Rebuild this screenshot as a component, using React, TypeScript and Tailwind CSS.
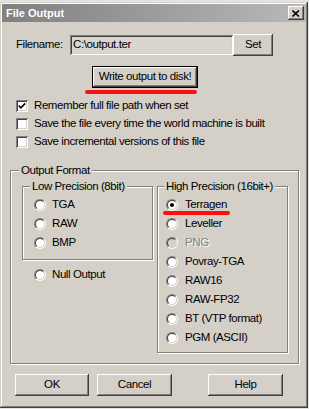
import React from "react";

const raised =
  "shadow-[inset_-1px_-1px_0_#404040,inset_1px_1px_0_#ffffff,inset_-2px_-2px_0_#808080,inset_2px_2px_0_#d4d0c8]";
const sunken =
  "shadow-[inset_1px_1px_0_#808080,inset_-1px_-1px_0_#ffffff,inset_2px_2px_0_#404040,inset_-2px_-2px_0_#d4d0c8]";
const etched = "border border-[#808080] shadow-[inset_1px_1px_0_#ffffff,1px_1px_0_#ffffff]";

function Radio({ checked = false, disabled = false }: { checked?: boolean; disabled?: boolean }) {
  return (
    <span className="relative inline-flex w-[12px] h-[12px] shrink-0 rounded-full border border-t-[#808080] border-l-[#808080] border-b-white border-r-white">
      <span
        className={
          "flex w-full h-full items-center justify-center rounded-full border border-t-[#404040] border-l-[#404040] border-b-[#d4d0c8] border-r-[#d4d0c8] " +
          (disabled ? "bg-[#d4d0c8]" : "bg-white")
        }
      >
        {checked && <span className="block w-[4px] h-[4px] rounded-full bg-black" />}
      </span>
    </span>
  );
}

function Check({ checked = false }: { checked?: boolean }) {
  return (
    <span className={"inline-flex w-[12px] h-[12px] shrink-0 bg-white items-center justify-center " + sunken}>
      {checked && (
        <svg width="12" height="12" viewBox="0 0 12 12">
          <path d="M2.8 5.6 L4.9 7.8 L9.2 3.4" fill="none" stroke="#000" strokeWidth="1.7" />
        </svg>
      )}
    </span>
  );
}

function RadioRow({ label, checked, disabled, gap = "gap-[6px]" }: { label: string; checked?: boolean; disabled?: boolean; gap?: string }) {
  return (
    <div className={"flex items-center h-[19px] " + gap}>
      <Radio checked={checked} disabled={disabled} />
      <span className={disabled ? "text-[#808080] [text-shadow:1px_1px_0_#fff]" : ""}>{label}</span>
    </div>
  );
}

function CheckRow({ label, checked }: { label: string; checked?: boolean }) {
  return (
    <div className="flex items-center h-[18px] gap-[6px] pl-[14px]">
      <Check checked={checked} />
      <span>{label}</span>
    </div>
  );
}

function Btn({ label, w }: { label: string; w: string }) {
  return (
    <div className={"flex items-center justify-center h-[22px] bg-[#d4d0c8] " + w + " " + raised}>{label}</div>
  );
}

export default function App() {
  return (
    <div
      className="w-[309px] h-[409px] bg-[#e6e4e0] overflow-hidden text-black text-[11.5px] tracking-[-0.42px] leading-none"
      style={{ fontFamily: '"Liberation Sans", Arial, sans-serif' }}
    >
      <div className="mt-[2px] w-[308px] h-[406px] bg-[#d4d0c8] shadow-[inset_-1px_-1px_0_#404040,inset_1px_1px_0_#d4d0c8,inset_-2px_-2px_0_#808080,inset_2px_2px_0_#ffffff] p-[2px] flex flex-col">
        {/* Title bar */}
        <div className="h-[18px] bg-gradient-to-r from-[#808080] to-[#b9b9b9] flex items-center justify-between pl-[4px] pr-[2px]">
          <span className="text-white font-bold text-[11px] tracking-[0px]">File Output</span>
          <div className={"w-[16px] h-[14px] bg-[#d4d0c8] flex items-center justify-center " + raised}>
            <svg width="8" height="7" viewBox="0 0 8 7">
              <path d="M0.5 0.5 L7 6.5 M7 0.5 L0.5 6.5" stroke="#000" strokeWidth="1.6" fill="none" />
            </svg>
          </div>
        </div>

        {/* Filename row */}
        <div className="flex items-center pt-[12px] pl-[14px]">
          <span className="w-[54px]">Filename:</span>
          <div className={"w-[163px] h-[20px] bg-[#d9d6d0] flex items-center pl-[3px] " + sunken}>C:\output.ter</div>
          <Btn label="Set" w="w-[40px] h-[20px]" />
        </div>

        {/* Write button */}
        <div className="mt-[10px] ml-[90px] w-[106px] h-[22px] border border-black">
          <div className={"w-full h-full bg-[#d4d0c8] flex items-center justify-center " + raised}>Write output to disk!</div>
        </div>
        <div className="mt-[2px] ml-[83px] w-[112px] h-[4px] rounded-full bg-[#ff1010] blur-[0.4px]" />

        {/* Checkboxes */}
        <div className="mt-[3px] flex flex-col">
          <CheckRow label="Remember full file path when set" checked />
          <CheckRow label="Save the file every time the world machine is built" />
          <CheckRow label="Save incremental versions of this file" />
        </div>

        {/* Output Format group */}
        <div className={"relative mt-[19px] ml-[8px] w-[289px] h-[194px] " + etched}>
          <span className="absolute -top-[6px] left-[8px] px-[2px] bg-[#d4d0c8]">Output Format</span>
          <div className="flex gap-[4px] pt-[15px] pl-[11px]">
            <div className="flex flex-col">
              <div className={"relative w-[131px] h-[74px] " + etched}>
                <span className="absolute -top-[6px] left-[7px] px-[2px] bg-[#d4d0c8]">Low Precision (8bit)</span>
                <div className="flex flex-col pt-[8px] pl-[11px]">
                  <RadioRow label="TGA" />
                  <RadioRow label="RAW" />
                  <RadioRow label="BMP" />
                </div>
              </div>
              <div className="mt-[5px] pl-[12px]">
                <RadioRow label="Null Output" />
              </div>
            </div>
            <div className={"relative w-[131px] h-[167px] " + etched}>
              <span className="absolute -top-[6px] left-[6px] px-[2px] bg-[#d4d0c8]">High Precision (16bit+)</span>
              <div className="flex flex-col pt-[8px] pl-[8px]">
                <div className="relative">
                  <RadioRow label="Terragen" checked gap="gap-[7px]" />
                  <div className="absolute left-[-3px] top-[16px] w-[67px] h-[4px] rounded-full bg-[#ff1010] blur-[0.4px]" />
                </div>
                <RadioRow label="Leveller" gap="gap-[7px]" />
                <RadioRow label="PNG" disabled gap="gap-[7px]" />
                <RadioRow label="Povray-TGA" gap="gap-[7px]" />
                <RadioRow label="RAW16" gap="gap-[7px]" />
                <RadioRow label="RAW-FP32" gap="gap-[7px]" />
                <RadioRow label="BT (VTP format)" gap="gap-[7px]" />
                <RadioRow label="PGM (ASCII)" gap="gap-[7px]" />
              </div>
            </div>
          </div>
        </div>

        {/* Bottom buttons */}
        <div className="flex mt-[10px] ml-[13px]">
          <Btn label="OK" w="w-[74px]" />
          <div className="w-[8px]" />
          <Btn label="Cancel" w="w-[75px]" />
          <div className="w-[36px]" />
          <Btn label="Help" w="w-[75px]" />
        </div>
      </div>
    </div>
  );
}
